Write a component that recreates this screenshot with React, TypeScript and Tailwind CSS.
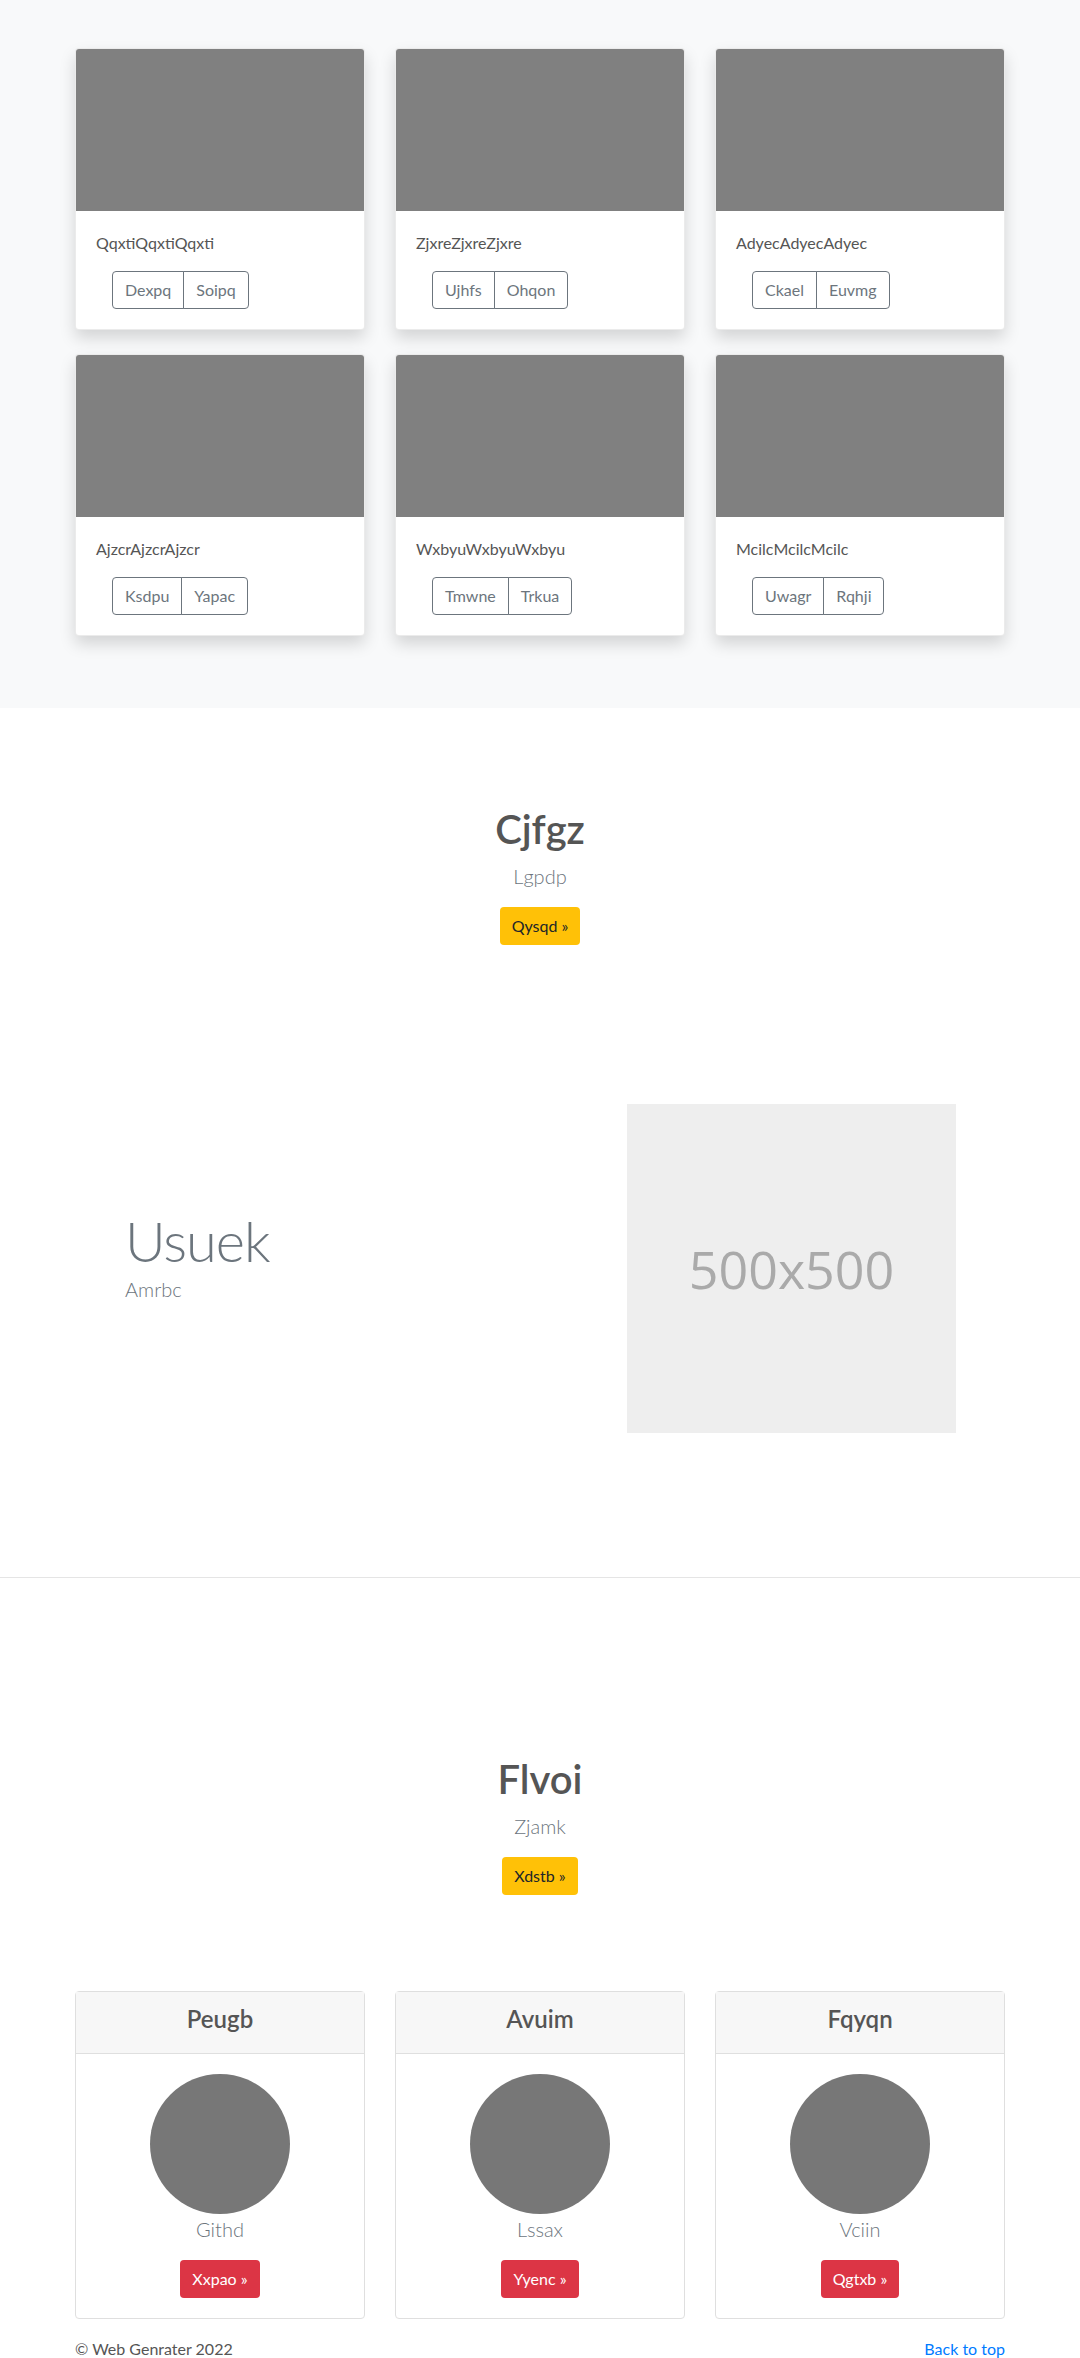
const albums = [
  { title: "QqxtiQqxtiQqxti", btns: ["Dexpq", "Soipq"] },
  { title: "ZjxreZjxreZjxre", btns: ["Ujhfs", "Ohqon"] },
  { title: "AdyecAdyecAdyec", btns: ["Ckael", "Euvmg"] },
  { title: "AjzcrAjzcrAjzcr", btns: ["Ksdpu", "Yapac"] },
  { title: "WxbyuWxbyuWxbyu", btns: ["Tmwne", "Trkua"] },
  { title: "McilcMcilcMcilc", btns: ["Uwagr", "Rqhji"] },
];

const plans = [
  { head: "Peugb", name: "Githd", btn: "Xxpao" },
  { head: "Avuim", name: "Lssax", btn: "Yyenc" },
  { head: "Fqyqn", name: "Vciin", btn: "Qgtxb" },
];

function AlbumCard({ title, btns }: { title: string; btns: string[] }) {
  return (
    <div className="bg-white border border-[rgba(0,0,0,0.08)] rounded shadow-[0_0.5rem_1rem_rgba(0,0,0,0.15)] overflow-hidden">
      <div className="h-[162px] bg-[#808080]" />
      <div className="p-5">
        <p className="text-base leading-6 text-[#555] mb-4">{title}</p>
        <div className="inline-flex ml-4">
          <button className="h-[38px] px-3 text-base text-[#6c757d] border border-[#6c757d] rounded-l">{btns[0]}</button>
          <button className="h-[38px] px-3 text-base text-[#6c757d] border border-[#6c757d] -ml-px rounded-r">{btns[1]}</button>
        </div>
      </div>
    </div>
  );
}

function Hero({ title, sub, btn }: { title: string; sub: string; btn: string }) {
  return (
    <div className="text-center">
      <h1 className="text-[40px] leading-[48px] font-semibold text-[#555] mb-2">{title}</h1>
      <p className="text-xl leading-[30px] font-light text-[#6c757d] mb-4">{sub}</p>
      <button className="h-[38px] px-3 rounded bg-[#ffc107] text-[#212529] text-base">{btn} »</button>
    </div>
  );
}

export default function App() {
  return (
    <div className="bg-white font-['Lato','Open_Sans',sans-serif] text-[#555]">
      <section className="bg-[#f8f9fa] pt-12 pb-[72px]">
        <div className="w-[930px] mx-auto grid grid-cols-3 gap-x-[30px] gap-y-6">
          {albums.map((a) => (
            <AlbumCard key={a.title} title={a.title} btns={a.btns} />
          ))}
        </div>
      </section>

      <section className="pt-[97px]">
        <Hero title="Cjfgz" sub="Lgpdp" btn="Qysqd" />
      </section>

      <section className="mt-[159px]">
        <div className="w-[930px] mx-auto flex items-center">
          <div className="flex-1 pl-[50px]">
            <h2 className="text-[56px] leading-[67px] font-light tracking-[-1px] text-[#6c757d]">Usuek</h2>
            <p className="text-xl leading-[30px] font-light text-[#6c757d] mb-[26px]">Amrbc</p>
          </div>
          <div className="w-[329px] h-[329px] mr-[49px] bg-[#eeeeee] flex items-center justify-center">
            <span className="font-['Open_Sans',sans-serif] text-[52px] text-[#aaaaaa]">500x500</span>
          </div>
        </div>
      </section>

      <hr className="mt-[144px] border-0 border-t border-[#e5e5e5]" />

      <section className="pt-[177px]">
        <Hero title="Flvoi" sub="Zjamk" btn="Xdstb" />
      </section>

      <section className="mt-[96px]">
        <div className="w-[930px] mx-auto grid grid-cols-3 gap-x-[30px]">
          {plans.map((p) => (
            <div key={p.head} className="border border-[#dfdfdf] rounded text-center">
              <div className="bg-[#f7f7f7] border-b border-[#dfdfdf] px-5 pt-3 pb-3">
                <h4 className="text-2xl leading-[29px] font-semibold text-[#555] mb-2">{p.head}</h4>
              </div>
              <div className="p-5 flex flex-col items-center">
                <div className="w-[140px] h-[140px] rounded-full bg-[#777777]" />
                <p className="text-xl leading-[30px] font-light text-[#6c757d] mb-4">{p.name}</p>
                <button className="h-[38px] px-3 rounded bg-[#dc3545] text-white text-base">{p.btn} »</button>
              </div>
            </div>
          ))}
        </div>
      </section>

      <footer className="w-[930px] mx-auto mt-[18px] flex justify-between text-base leading-6">
        <span className="text-[#555]">© Web Genrater 2022</span>
        <a href="#" className="text-[#007bff]">Back to top</a>
      </footer>
    </div>
  );
}
